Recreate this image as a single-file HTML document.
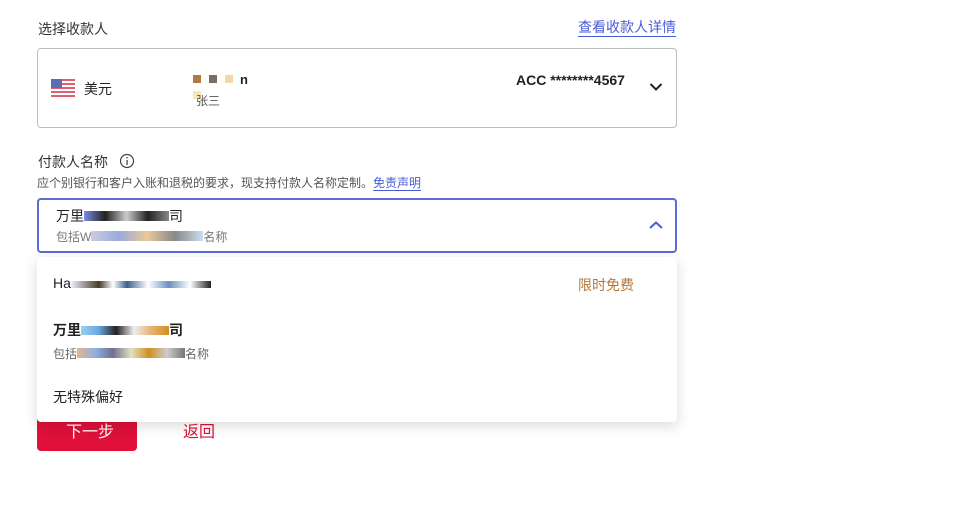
<!DOCTYPE html>
<html><head><meta charset="utf-8"><style>
*{margin:0;padding:0;box-sizing:border-box}
body{width:975px;height:510px;background:#fff;font-family:"Liberation Sans","Noto Sans CJK SC",sans-serif;color:#222;position:relative;overflow:hidden}
.a{position:absolute;white-space:nowrap}
.px{position:absolute;width:8px;height:8px}
</style></head><body>
<div class="a" style="left:38px;top:19px;font-size:14px;color:#333">选择收款人</div>
<div class="a" style="left:578px;top:19px;font-size:14px;color:#4a5bd8;border-bottom:1px solid #4a5bd8;line-height:17px">查看收款人详情</div>
<div class="a" style="left:37px;top:48px;width:640px;height:80px;border:1px solid #bdbdbd;border-radius:4px"></div>
<svg class="a" style="left:51px;top:79px" width="24" height="18" viewBox="0 0 24 18"><rect width="24" height="18" rx="2" fill="#fff"/><g fill="#e06070"><rect y="0" width="24" height="2"/><rect y="4" width="24" height="2"/><rect y="8" width="24" height="2"/><rect y="12" width="24" height="2"/><rect y="16" width="24" height="2"/></g><rect width="11" height="9" fill="#5a6fb0"/></svg>
<div class="a" style="left:84px;top:79px;font-size:14px">美元</div>
<div class="px" style="left:193px;top:75px;background:#b07a40"></div>
<div class="px" style="left:209px;top:75px;background:#7a6e60"></div>
<div class="px" style="left:225px;top:75px;background:#f0d8a8"></div>
<div class="a" style="left:240px;top:72px;font-size:13px;font-weight:bold">n</div>
<div class="px" style="left:193px;top:91px;background:#f8e6b8"></div>
<div class="a" style="left:196px;top:92px;font-size:12px;color:#555">张三</div>
<div class="a" style="left:516px;top:72px;font-size:14px;font-weight:bold">ACC ********4567</div>
<svg class="a" style="left:649px;top:82px" width="14" height="10" viewBox="0 0 14 10"><path d="M1.5 2 L7 7.5 L12.5 2" stroke="#222" stroke-width="2" fill="none"/></svg>
<div class="a" style="left:38px;top:152px;font-size:14px;color:#333">付款人名称</div>
<svg class="a" style="left:119px;top:153px" width="16" height="16" viewBox="0 0 16 16"><circle cx="8" cy="8" r="6.5" stroke="#444" stroke-width="1.2" fill="none"/><rect x="7.4" y="7" width="1.3" height="5" fill="#444"/><rect x="7.4" y="4" width="1.3" height="1.4" fill="#444"/></svg>
<div class="a" style="left:37px;top:174px;font-size:12px;color:#555">应个别银行和客户入账和退税的要求，现支持付款人名称定制。<span style="color:#4a5bd8;border-bottom:1px solid #4a5bd8">免责声明</span></div>
<div class="a" style="left:37px;top:198px;width:640px;height:55px;border:2px solid #5b6be0;border-radius:4px"></div>
<div class="a" style="left:56px;top:206px;font-size:14px">万里<span style="display:inline-block;width:85px;height:10px;background:linear-gradient(90deg,#7b8ee8,#222,#ccc,#222,#888)"></span>司</div>
<div class="a" style="left:56px;top:228px;font-size:12px;color:#777">包括W<span style="display:inline-block;width:112px;height:10px;background:linear-gradient(90deg,#ccd,#9ad,#e9c99a,#888,#cde)"></span>名称</div>
<svg class="a" style="left:648px;top:220px" width="16" height="10" viewBox="0 0 16 10"><path d="M2 8 L8 2.5 L14 8" stroke="#4a5bd8" stroke-width="2" fill="none"/></svg>
<div class="a" style="left:37px;top:405px;width:100px;height:46px;background:#e0103a;border-radius:4px"></div>
<div class="a" style="left:66px;top:418px;font-size:16px;color:#fff">下一步</div>
<div class="a" style="left:183px;top:418px;font-size:16px;color:#e0103a">返回</div>
<div class="a" style="left:37px;top:257px;width:640px;height:165px;background:#fff;border-radius:4px;box-shadow:0 4px 14px rgba(0,0,0,0.15)"></div>
<div class="a" style="left:53px;top:275px;font-size:14px">Ha<span style="display:inline-block;width:140px;height:7px;background:linear-gradient(90deg,#eef,#4a3a2a 20%,#fff,#3a6090 40%,#fff,#6a90c0 70%,#fff,#222)"></span></div>
<div class="a" style="left:578px;top:275px;font-size:14px;color:#b5763a">限时免费</div>
<div class="a" style="left:53px;top:320px;font-size:14px;font-weight:bold">万里<span style="display:inline-block;width:88px;height:9px;background:linear-gradient(90deg,#9cd0f0,#6aa8e0,#222,#eee,#e8b070,#d09020)"></span>司</div>
<div class="a" style="left:53px;top:345px;font-size:12px;color:#666">包括<span style="display:inline-block;width:108px;height:10px;background:linear-gradient(90deg,#e0b890,#90b0e0,#707090,#e0e0c0,#d09020,#ccc,#777)"></span>名称</div>
<div class="a" style="left:53px;top:387px;font-size:14px">无特殊偏好</div>
</body></html>
